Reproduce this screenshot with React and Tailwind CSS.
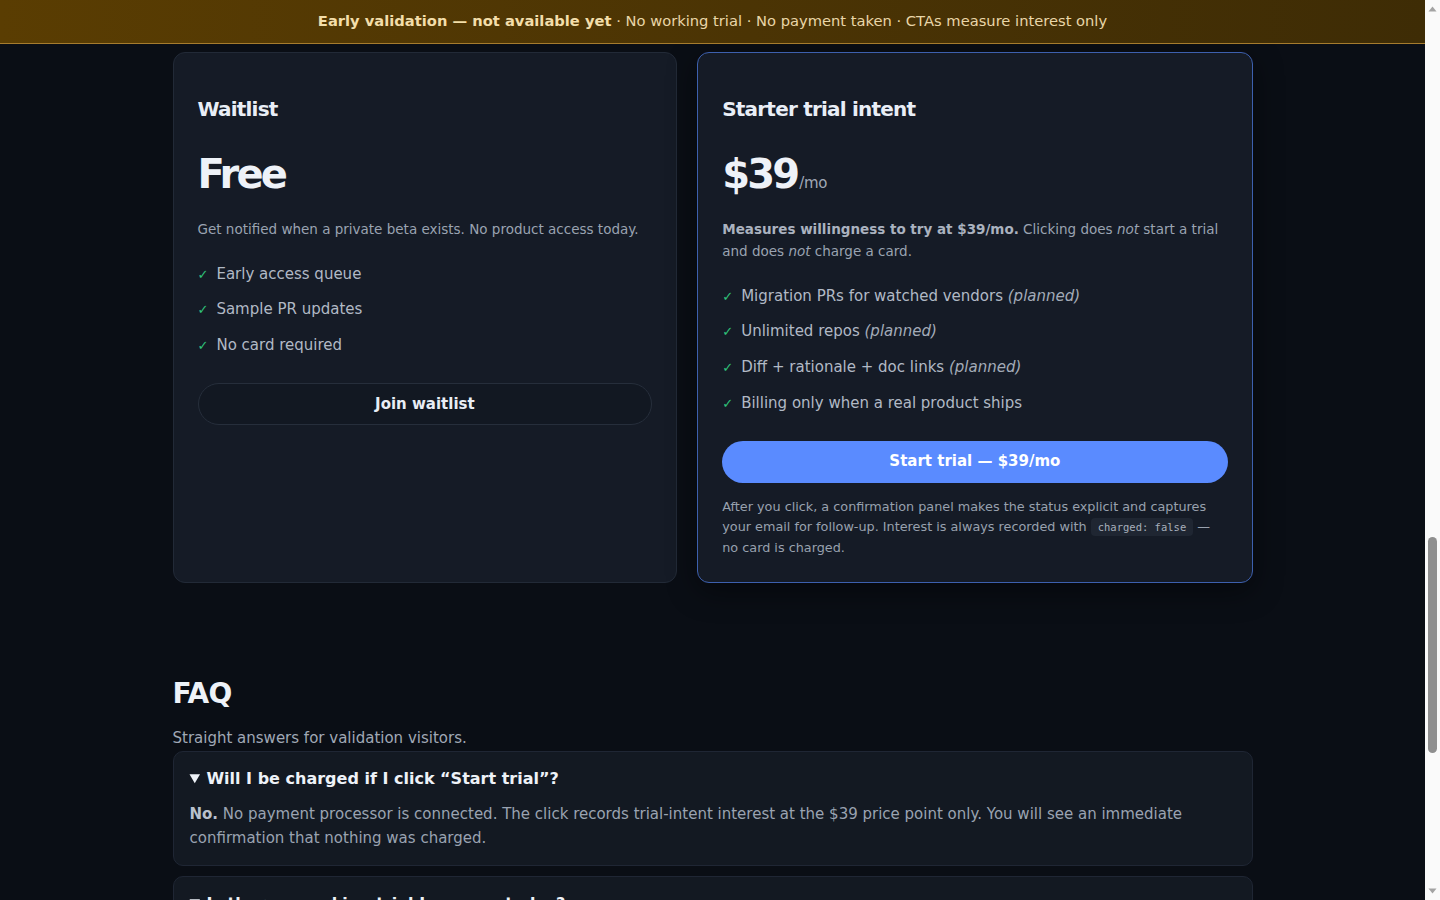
import { useState } from 'react'

const WAITLIST_FEATURES = ['Early access queue', 'Sample PR updates', 'No card required']

const STARTER_FEATURES = [
  { label: 'Migration PRs for watched vendors', planned: true },
  { label: 'Unlimited repos', planned: true },
  { label: 'Diff + rationale + doc links', planned: true },
  { label: 'Billing only when a real product ships', planned: false },
]

const FAQ = [
  {
    q: 'Will I be charged if I click “Start trial”?',
    lead: 'No.',
    a: 'No payment processor is connected. The click records trial-intent interest at the $39 price point only. You will see an immediate confirmation that nothing was charged.',
  },
  {
    q: 'Is there a working trial I can use today?',
    lead: 'Not yet.',
    a: 'This page exists to find out whether enough teams want migration PRs before we build the product. Joining the waitlist or clicking the trial button only records interest.',
  },
  {
    q: 'What happens to my email?',
    lead: 'One follow-up.',
    a: 'We use it to tell you if a private beta opens. No newsletter, no resale, and you can ask us to delete it at any time.',
  },
]

function Check() {
  return <span className="mr-2 text-[13px] leading-none text-[#2fc27a]">✓</span>
}

function WaitlistCard() {
  return (
    <div className="rounded-xl border border-[#222a37] bg-[#151b26] px-6 pt-[42px] pb-6">
      <h3 className="text-[20px] leading-7 font-bold tracking-[-0.04em] text-[#e9eef6]">Waitlist</h3>
      <div className="mt-[29px] text-[40px] leading-[44px] font-bold tracking-[-0.07em] text-[#eef2f8]">Free</div>
      <p className="mt-[22px] text-[13.5px] leading-[22px] text-[#9aa3b1]">
        Get notified when a private beta exists. No product access today.
      </p>
      <ul className="mt-[21.5px] flex flex-col gap-[11.7px] text-[15px] leading-6 text-[#b1b9c5]">
        {WAITLIST_FEATURES.map(f => (
          <li key={f}><Check />{f}</li>
        ))}
      </ul>
      <button className="mt-[26px] h-[42px] w-full rounded-full border border-[#262e3b] bg-[#121822] text-[15px] font-bold text-[#e8edf5]">
        Join waitlist
      </button>
    </div>
  )
}

function StarterCard({ onStart }) {
  return (
    <div className="rounded-xl border border-[#3d60ae] bg-[#151b26] px-6 pt-[42px] pb-6 shadow-[0_8px_30px_rgba(0,0,0,0.45)]">
      <h3 className="text-[20px] leading-7 font-bold tracking-[-0.04em] text-[#e9eef6]">Starter trial intent</h3>
      <div className="mt-[29px] text-[40px] leading-[44px] text-[#eef2f8]">
        <span className="font-bold tracking-[-0.07em]">$39</span>
        <span className="ml-[2px] text-[15px] leading-none tracking-tight text-[#a0a8b6]">/mo</span>
      </div>
      <p className="mt-[22px] text-[13.5px] leading-[22px] text-[#9aa3b1]">
        <strong className="font-bold text-[#aab2bf]">Measures willingness to try at $39/mo.</strong> Clicking does{' '}
        <em>not</em> start a trial and does <em>not</em> charge a card.
      </p>
      <ul className="mt-[21.5px] flex flex-col gap-[11.7px] text-[15px] leading-6 text-[#b1b9c5]">
        {STARTER_FEATURES.map(f => (
          <li key={f.label}>
            <Check />
            {f.label}
            {f.planned && <em className="text-[#a3abb8]"> (planned)</em>}
          </li>
        ))}
      </ul>
      <button
        onClick={onStart}
        className="mt-[26px] h-[42px] w-full rounded-full bg-[#5a8bff] text-[15px] font-bold text-white"
      >
        Start trial — $39/mo
      </button>
      <p className="mt-[14px] text-[12.8px] leading-[20.5px] text-[#98a1ae]">
        After you click, a confirmation panel makes the status explicit and captures your email for follow-up. Interest is
        always recorded with{' '}
        <code className="rounded bg-[#1f2632] px-[7px] py-[3px] font-['DejaVu_Sans_Mono',monospace] text-[10.5px] text-[#a7afbb]">
          charged: false
        </code>{' '}
        — no card is charged.
      </p>
    </div>
  )
}

function FaqItem({ item }) {
  return (
    <details open className="rounded-[10px] border border-[#1f2634] bg-[#131922] px-4 pt-[15px] pb-[15px]">
      <summary className="cursor-pointer text-[16px] leading-6 font-bold text-[#eef2f8]">{item.q}</summary>
      <p className="mt-[11px] text-[15px] leading-6 text-[#9aa3b1]">
        <strong className="font-bold text-[#b9c1cd]">{item.lead}</strong> {item.a}
      </p>
    </details>
  )
}

// thin light rail on the right edge of the shell, with a grey thumb
function ScrollRail() {
  return (
    <div className="flex w-[15px] shrink-0 flex-col items-center bg-[#fafafa]">
      <svg width="9" height="15" viewBox="0 0 9 15" className="mt-[1px]">
        <polygon points="0.5,10.5 4.5,5.5 8.5,10.5" fill="#a3a3a3" />
      </svg>
      <div className="mt-[521px] h-[216px] w-[9px] rounded-full bg-[#8f8f8f]" />
      <div className="flex-1" />
      <svg width="9" height="15" viewBox="0 0 9 15" className="mb-[1px]">
        <polygon points="0.5,4.5 8.5,4.5 4.5,9.5" fill="#a3a3a3" />
      </svg>
    </div>
  )
}

export default function App() {
  const [clicked, setClicked] = useState(false)

  return (
    <div className="flex h-screen bg-[#0a0e15] font-['DejaVu_Sans',sans-serif]">
      <div className="min-w-0 flex-1 overflow-y-auto">
        <div className="sticky top-0 z-10 flex h-[44px] items-center justify-center border-b border-[#a67c2e] bg-linear-to-r from-[#5a3d02] to-[#3e2c05] text-[14.7px]">
          <span className="font-bold text-[#f3deaa]">Early validation — not available yet</span>
          <span className="text-[#e9d6a8]">&nbsp;· No working trial · No payment taken · CTAs measure interest only</span>
        </div>

        <main className="mx-auto max-w-[1080px] pt-2 pb-24">
          <section className="grid grid-cols-[1fr_1.1fr] gap-5">
            <WaitlistCard />
            <StarterCard onStart={() => setClicked(true)} />
          </section>

          {clicked && (
            <p className="mt-4 text-sm text-[#9aa3b1]">Interest recorded — nothing was charged.</p>
          )}

          <section className="mt-[94px]">
            <h2 className="text-[28px] leading-[34px] font-bold tracking-[-0.03em] text-[#eef2f8]">FAQ</h2>
            <p className="mt-[15px] text-[15px] leading-6 text-[#a0a8b5]">Straight answers for validation visitors.</p>
            <div className="mt-[1px] flex flex-col gap-2.5">
              {FAQ.map(item => (
                <FaqItem key={item.q} item={item} />
              ))}
            </div>
          </section>
        </main>
      </div>
      <ScrollRail />
    </div>
  )
}
